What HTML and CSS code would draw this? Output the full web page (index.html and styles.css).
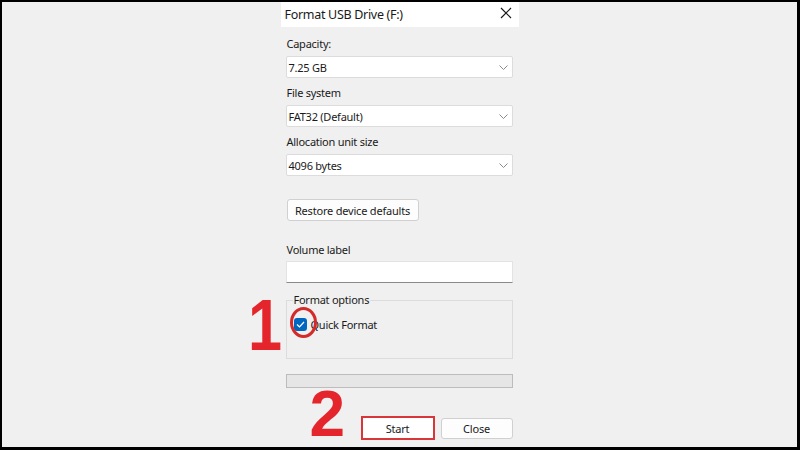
FILE: index.html
```html
<!DOCTYPE html>
<html>
<head>
<meta charset="utf-8">
<link rel="stylesheet" href="styles.css">
</head>
<body>
<div class="screen">
  <div class="dialog">
    <div class="titlebar">
      <span class="title">Format USB Drive (F:)</span>
      <svg class="close-x" width="12" height="12" viewBox="0 0 12 12"><path d="M1 1L11 11M11 1L1 11" stroke="#1a1a1a" stroke-width="1.2" fill="none"/></svg>
    </div>
    <div class="body">
      <div class="label">Capacity:</div>
      <div class="combo"><span>7.25 GB</span><svg class="chev" width="9" height="5" viewBox="0 0 9 5"><path d="M0.5 0.5L4.5 4.5L8.5 0.5" stroke="#8a8a8a" fill="none"/></svg></div>
      <div class="label">File system</div>
      <div class="combo"><span>FAT32 (Default)</span><svg class="chev" width="9" height="5" viewBox="0 0 9 5"><path d="M0.5 0.5L4.5 4.5L8.5 0.5" stroke="#8a8a8a" fill="none"/></svg></div>
      <div class="label">Allocation unit size</div>
      <div class="combo"><span>4096 bytes</span><svg class="chev" width="9" height="5" viewBox="0 0 9 5"><path d="M0.5 0.5L4.5 4.5L8.5 0.5" stroke="#8a8a8a" fill="none"/></svg></div>
      <div class="btn restore">Restore device defaults</div>
      <div class="label vol">Volume label</div>
      <div class="textbox"></div>
      <div class="group">
        <span class="legend">Format options</span>
        <div class="check-row">
          <span class="checkbox"><svg width="9" height="7" viewBox="0 0 9 7"><path d="M1 3.5L3.5 6L8 1" stroke="#fff" stroke-width="1.2" fill="none"/></svg></span>
          <span class="check-text">Quick Format</span>
        </div>
        <span class="ring"></span>
        <span class="num one">1</span>
      </div>
      <div class="progress"></div>
      <div class="actions">
        <span class="num two">2</span>
        <div class="highlight"><div class="btn start">Start</div></div>
        <div class="btn close">Close</div>
      </div>
    </div>
  </div>
</div>
</body>
</html>
```
FILE: styles.css
```css
* { box-sizing: border-box; }
html, body { margin: 0; padding: 0; }
body {
  background: #000;
  font-family: "Noto Sans", "Open Sans", sans-serif;
  color: #1a1a1a;
}
.screen {
  width: 800px;
  height: 450px;
  background: #f0f0f0;
  border-style: solid;
  border-color: #000;
  border-width: 2px 3px 3px 2px;
  display: flex;
  justify-content: center;
}
.dialog {
  width: 238px;
  display: flex;
  flex-direction: column;
}
.titlebar {
  height: 25px;
  background: #fff;
  display: flex;
  align-items: center;
  justify-content: space-between;
  padding: 0 7px 0 4px;
}
.title {
  font-size: 12.5px;
  letter-spacing: -0.3px;
  color: #1a1a1a;
}
.close-x { margin-top: -4px; }
.body {
  padding: 0 6px 0 5px;
  display: flex;
  flex-direction: column;
  position: relative;
}
.label {
  font-size: 11px;
  letter-spacing: -0.25px;
  line-height: 16px;
  margin-top: 7px;
  margin-bottom: 4px;
  padding-left: 1px;
}
.body > .label:first-child { margin-top: 9px; }
.combo {
  height: 22px;
  background: #fff;
  border: 1px solid #dcdcdc;
  border-radius: 2px;
  display: flex;
  align-items: center;
  justify-content: space-between;
  padding: 0 4px 0 2px;
  font-size: 11px;
  letter-spacing: -0.25px;
}
.btn {
  background: #fdfdfd;
  border: 1px solid #d0d0d0;
  border-radius: 3px;
  font-size: 11px;
  letter-spacing: -0.2px;
  display: flex;
  align-items: center;
  justify-content: center;
}
.restore {
  margin-top: 23px;
  margin-left: 1px;
  width: 132px;
  height: 22px;
}
.label.vol { margin-top: 21px; margin-bottom: 3px; }
.textbox {
  height: 22px;
  background: #fff;
  border: 1px solid #e3e3e3;
  border-bottom: 1px solid #8a8a8a;
}
.group {
  position: relative;
  margin-top: 17px;
  height: 59px;
  border: 1px solid #dcdcdc;
  padding: 10px 0 0 7px;
}
.legend {
  position: absolute;
  top: -9px;
  left: 6px;
  background: #f0f0f0;
  padding: 0 1px;
  font-size: 11px;
  letter-spacing: -0.25px;
  line-height: 16px;
}
.check-row {
  display: flex;
  align-items: center;
  gap: 4px;
  margin-top: 6px;
}
.checkbox {
  width: 13px;
  height: 13px;
  background: #0067c0;
  border-radius: 3px;
  display: flex;
  align-items: center;
  justify-content: center;
}
.check-text { font-size: 11px; letter-spacing: -0.25px; }
.ring {
  position: absolute;
  left: 3px;
  top: 6px;
  width: 27px;
  height: 31px;
  border: 3px solid #d42a2a;
  border-radius: 50%;
}
.num {
  position: absolute;
  font-family: "Liberation Sans", Arial, sans-serif;
  font-weight: bold;
  color: #e4252b;
  line-height: 1;
}
.one {
  font-size: 72px;
  left: -42px;
  top: -12px;
  transform: scaleX(0.85);
}
.progress {
  margin-top: 15px;
  height: 14px;
  background: #e6e6e6;
  border: 1px solid #bcbcbc;
}
.actions {
  position: relative;
  display: flex;
  justify-content: flex-end;
  align-items: center;
  gap: 6px;
  margin-top: 28px;
}
.highlight {
  border: 2px solid #d9363a;
  padding: 1px;
  width: 74px;
  height: 24px;
  background: #fff;
}
.start {
  height: 100%;
  border: none;
  background: #fff;
  border-radius: 0;
}
.close {
  width: 72px;
  height: 21px;
}
.two {
  font-size: 64px;
  left: 24px;
  top: -34px;
}
```
